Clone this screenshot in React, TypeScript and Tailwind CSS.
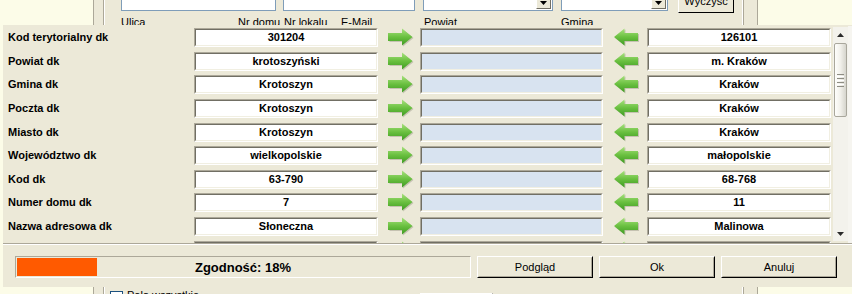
import React from "react";

const rows: [string, string, string][] = [
  ["Kod terytorialny dk", "301204", "126101"],
  ["Powiat dk", "krotoszyński", "m. Kraków"],
  ["Gmina dk", "Krotoszyn", "Kraków"],
  ["Poczta dk", "Krotoszyn", "Kraków"],
  ["Miasto dk", "Krotoszyn", "Kraków"],
  ["Województwo dk", "wielkopolskie", "małopolskie"],
  ["Kod dk", "63-790", "68-768"],
  ["Numer domu dk", "7", "11"],
  ["Nazwa adresowa dk", "Słoneczna", "Malinowa"],
  ["Ulica dk", "", ""],
];

function Sunk({ w, bg, children }: { w: string; bg: string; children?: React.ReactNode }) {
  return (
    <div className={`${w} h-[19px] shrink-0 border border-t-[#aca899] border-l-[#aca899] border-b-white border-r-white`}>
      <div
        className={`h-full border border-t-[#716f64] border-l-[#716f64] border-b-[#f1efe2] border-r-[#f1efe2] ${bg} flex items-center justify-center text-[11px] font-bold text-black leading-none`}
      >
        {children}
      </div>
    </div>
  );
}

function ArrowRight() {
  return (
    <svg width="26" height="19" viewBox="0 0 26 19" className="shrink-0">
      <defs>
        <linearGradient id="agr" x1="0" y1="0" x2="0" y2="1">
          <stop offset="0" stopColor="#a8e27e" />
          <stop offset="0.5" stopColor="#6ac040" />
          <stop offset="1" stopColor="#3e9b22" />
        </linearGradient>
      </defs>
      <path d="M1.5 6 H15 V1.5 L25.5 10 L15 18.5 V14 H1.5 Z" fill="#6b6a55" opacity="0.3" />
      <path d="M0 5 H14 V0.5 L24.5 9 L14 17.5 V13 H0 Z" fill="url(#agr)" />
    </svg>
  );
}

function ArrowLeft() {
  return (
    <svg width="26" height="19" viewBox="0 0 26 19" className="shrink-0">
      <defs>
        <linearGradient id="agl" x1="0" y1="0" x2="0" y2="1">
          <stop offset="0" stopColor="#a8e27e" />
          <stop offset="0.5" stopColor="#6ac040" />
          <stop offset="1" stopColor="#3e9b22" />
        </linearGradient>
      </defs>
      <path d="M26 6 H12.5 V1.5 L2 10 L12.5 18.5 V14 H26 Z" fill="#6b6a55" opacity="0.3" />
      <path d="M25 5 H11.5 V0.5 L1 9 L11.5 17.5 V13 H25 Z" fill="url(#agl)" />
    </svg>
  );
}

function XPButton({ children, w }: { children: React.ReactNode; w: string }) {
  return (
    <div className={`${w} h-[22px] shrink-0 border border-t-white border-l-white border-b-black border-r-black`}>
      <div className="h-full border border-t-[#ece9d8] border-l-[#ece9d8] border-b-[#aca899] border-r-[#aca899] bg-[#ece9d8] flex items-center justify-center text-[11px] text-black">
        {children}
      </div>
    </div>
  );
}

function Scrollbar() {
  return (
    <div className="mt-px h-[214px] w-[15px] shrink-0 bg-[#f3f2ec] flex flex-col items-center">
      <div className="h-[15px] w-full flex items-center justify-center">
        <svg width="7" height="4" viewBox="0 0 7 4">
          <path d="M0 4 L3.5 0 L7 4 Z" fill="#2b2b2b" />
        </svg>
      </div>
      <div className="mt-px h-[74px] w-[13px] rounded-[2px] border border-[#a9a79c] bg-gradient-to-r from-[#fefefc] via-[#f1f0ea] to-[#d6d5cd] flex flex-col items-center justify-center gap-[1px]">
        <div className="h-px w-[7px] bg-[#8e8d84]" />
        <div className="h-px w-[7px] bg-white" />
        <div className="h-px w-[7px] bg-[#8e8d84]" />
        <div className="h-px w-[7px] bg-white" />
        <div className="h-px w-[7px] bg-[#8e8d84]" />
        <div className="h-px w-[7px] bg-white" />
        <div className="h-px w-[7px] bg-[#8e8d84]" />
      </div>
      <div className="flex-1" />
      <div className="h-[15px] w-full flex items-center justify-center">
        <svg width="7" height="4" viewBox="0 0 7 4">
          <path d="M0 0 L3.5 4 L7 0 Z" fill="#2b2b2b" />
        </svg>
      </div>
    </div>
  );
}

function BgInput({ w }: { w: string }) {
  return <div className={`${w} h-[21px] shrink-0 border border-[#7f9db9] bg-white`} />;
}

function BgCombo({ w }: { w: string }) {
  return (
    <div className={`${w} h-[21px] shrink-0 border border-[#7f9db9] bg-white flex justify-end p-px`}>
      <div className="w-[15px] h-full border border-t-white border-l-white border-b-[#716f64] border-r-[#716f64] bg-[#ece9d8] flex items-end justify-center pb-[3px]">
        <svg width="7" height="4" viewBox="0 0 7 4">
          <path d="M0 0 L3.5 4 L7 0 Z" fill="#000" />
        </svg>
      </div>
    </div>
  );
}

export default function App() {
  return (
    <div className="relative w-[852px] h-[294px] overflow-hidden bg-[#fcfce8] font-['Liberation_Sans',Arial,sans-serif] text-black">
      {/* background window */}
      <div className="ml-[93px] w-[665px] h-full bg-[#ece9d8] border-x border-[#aca899] flex">
        <div className="ml-[9px] w-[641px] h-full border-x border-[#aca899] shadow-[inset_1px_0_0_#fff,inset_-1px_0_0_#fff] flex flex-col">
          <div className="mt-[-10px] pl-[17px] flex items-start">
            <BgInput w="w-[155px]" />
            <div className="ml-[7px]">
              <BgInput w="w-[132px]" />
            </div>
            <div className="ml-[8px]">
              <BgCombo w="w-[130px]" />
            </div>
            <div className="ml-[8px]">
              <BgCombo w="w-[107px]" />
            </div>
            <div className="ml-[10px] w-[56px] h-[22px] mt-[1px] border border-t-white border-l-white border-b-black border-r-black bg-[#ece9d8] flex items-center justify-center text-[11px] leading-none pb-[2px]">
              Wyczyść
            </div>
          </div>
          <div className="mt-[3px] pl-[17px] flex text-[11px] leading-[13px]">
            <span className="w-[117px]">Ulica</span>
            <span className="w-[46px]">Nr domu</span>
            <span className="w-[57px]">Nr lokalu</span>
            <span className="w-[83px]">E-Mail</span>
            <span className="w-[137px]">Powiat</span>
            <span>Gmina</span>
          </div>
          <div className="mt-auto mb-[-10px] pl-[6px] flex items-start">
            <div className="mt-[2px] w-[13px] h-[13px] border border-[#1c5180] bg-white" />
            <span className="ml-[4px] text-[11px] leading-[13px]">Pola wszystkie</span>
            <div className="ml-[221px] mt-[4px] w-[73px] h-[10px] border-t border-t-white border-r border-r-[#716f64] border-l border-l-white" />
          </div>
        </div>
      </div>

      {/* dialog */}
      <div className="absolute left-[3px] top-[25px] w-[849px] h-[262px] bg-[#ece9d8] flex flex-col">
        <div className="h-[219px] pt-px flex border-b border-b-[#aca899]">
          <div className="w-[830px] shrink-0 overflow-hidden pl-[5px]">
            {rows.map(([label, a, b], i) => (
              <div key={i} className="h-[23.6px] flex items-center">
                <div className="w-[186px] shrink-0 text-[11px] font-bold leading-none">{label}</div>
                <Sunk w="w-[184px]" bg="bg-white">{a}</Sunk>
                <div className="ml-[10px] flex">
                  <ArrowRight />
                </div>
                <div className="ml-[6px]">
                  <Sunk w="w-[183px]" bg="bg-[#d8e3f0]" />
                </div>
                <div className="ml-[10px] flex">
                  <ArrowLeft />
                </div>
                <div className="ml-[8px]">
                  <Sunk w="w-[184px]" bg="bg-white">{b}</Sunk>
                </div>
              </div>
            ))}
          </div>
          <Scrollbar />
          <div className="w-[4px] shrink-0 bg-[#f6f5f0]" />
        </div>
        <div className="h-px bg-white" />
        <div className="h-[42px] pt-[11px] pl-[12px] flex gap-[6px]">
          <div className="relative w-[456px] h-[22px] shrink-0 border border-t-[#aca899] border-l-[#aca899] border-b-white border-r-white p-px">
            <div className="h-full w-[80px] bg-[#ff5a00]" />
            <div className="absolute inset-0 flex items-center justify-center text-[13px] font-bold leading-none">
              Zgodność: 18%
            </div>
          </div>
          <XPButton w="w-[116px]">Podgląd</XPButton>
          <XPButton w="w-[116px]">Ok</XPButton>
          <XPButton w="w-[116px]">Anuluj</XPButton>
        </div>
      </div>
    </div>
  );
}
